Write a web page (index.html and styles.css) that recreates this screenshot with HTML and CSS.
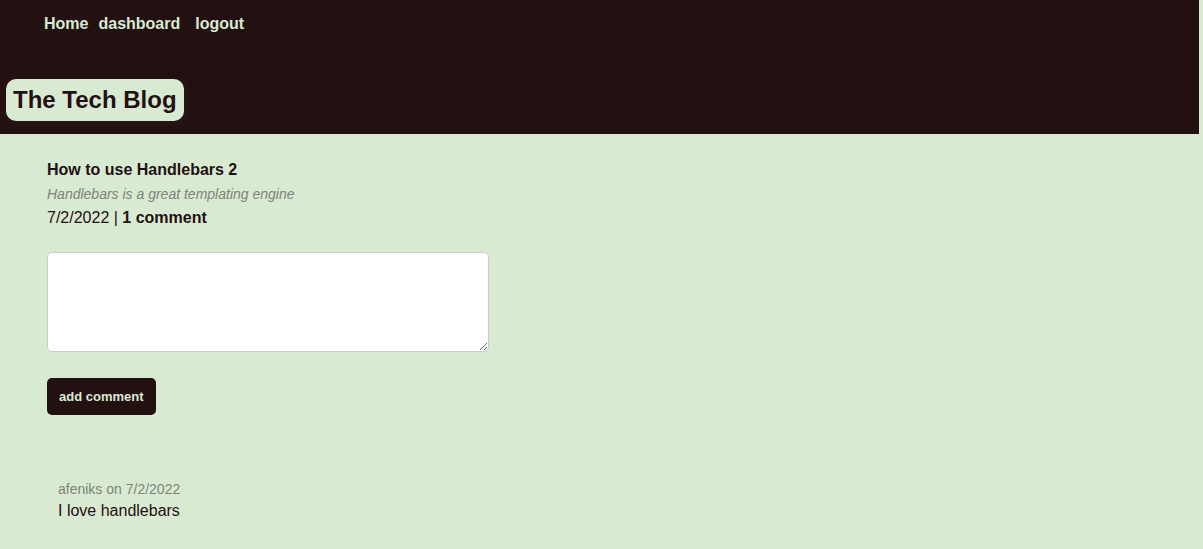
FILE: index.html
```html
<!DOCTYPE html>
<html lang="en">
<head>
<meta charset="utf-8">
<meta name="viewport" content="width=device-width, initial-scale=1">
<title>The Tech Blog</title>
<link rel="stylesheet" href="styles.css">
</head>
<body>
<header class="site-header">
  <nav class="site-nav">
    <a href="#">Home</a>
    <a href="#">dashboard</a>
    <a class="logout" href="#">logout</a>
  </nav>
  <h1 class="brand">The Tech Blog</h1>
</header>
<main class="content">
  <article class="post">
    <h2 class="post-title">How to use Handlebars 2</h2>
    <p class="post-text">Handlebars is a great templating engine</p>
    <p class="post-meta">7/2/2022 | <a href="#comments">1 comment</a></p>
  </article>
  <form class="comment-form">
    <textarea class="comment-input" name="comment" aria-label="Comment"></textarea>
    <button class="comment-button" type="button">add comment</button>
  </form>
  <section class="comments" id="comments">
    <p class="comment-meta">afeniks on 7/2/2022</p>
    <p class="comment-text">I love handlebars</p>
  </section>
</main>
</body>
</html>
```
FILE: styles.css
```css
* {
  box-sizing: border-box;
}

body {
  margin: 0;
  background: #d9ead3;
  color: #231010;
  font-family: "Liberation Sans", Arial, sans-serif;
  font-size: 16px;
  line-height: 24px;
}

h1, h2, p {
  margin: 0;
}

.site-header {
  display: flex;
  flex-direction: column;
  align-items: flex-start;
  gap: 43px;
  margin-right: 4px;
  padding: 12px 6px 13px;
  background: #231010;
}

.site-nav {
  display: flex;
  gap: 10px;
  padding-left: 38px;
}

.site-nav a {
  color: #d9ead3;
  font-weight: bold;
  text-decoration: none;
}

.site-nav .logout {
  margin-left: 5px;
}

.brand {
  padding: 8px 7px;
  border-radius: 10px;
  background: #d9ead3;
  box-shadow: 2px 2px 8px #2c1919;
  font-size: 24px;
  line-height: 26px;
}

.content {
  padding: 24px 47px;
}

.post-title {
  font-size: 16px;
}

.post-text {
  color: #7d8379;
  font-size: 14px;
  font-style: italic;
}

.post-meta a {
  color: inherit;
  font-weight: bold;
  text-decoration: none;
}

.comment-form {
  display: flex;
  flex-direction: column;
  align-items: flex-start;
  gap: 26px;
  margin-top: 22px;
}

.comment-input {
  width: 442px;
  max-width: 100%;
  height: 100px;
  padding: 10px;
  border: 1px solid #cccccc;
  border-radius: 5px;
  background: #ffffff;
}

.comment-button {
  padding: 11px 12px;
  border: 0;
  border-radius: 5px;
  background: #231010;
  color: #d9ead3;
  font: bold 13px/15px "Liberation Sans", Arial, sans-serif;
}

.comments {
  margin-top: 63px;
  padding-left: 11px;
  line-height: 22px;
}

.comment-meta {
  color: #7d8379;
  font-size: 14px;
}
```
